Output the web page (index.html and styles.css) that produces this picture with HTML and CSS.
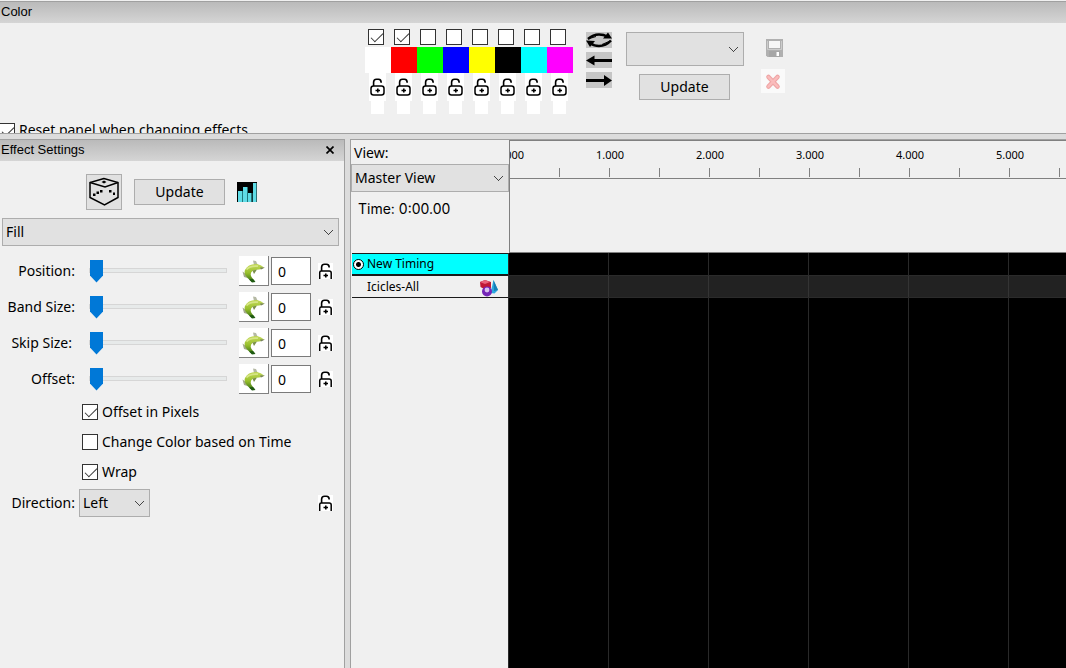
FILE: index.html
```html
<!DOCTYPE html>
<html lang="en">
<head>
<meta charset="utf-8">
<title>Sequencer</title>
<link rel="stylesheet" href="styles.css">
</head>
<body>
<svg class="defs" aria-hidden="true">
  <symbol id="lock" viewBox="0 0 16 18">
    <rect x="1" y="8" width="13" height="9" rx="2.5" fill="#fff" stroke="#000" stroke-width="1.5"/>
    <path d="M3.6 8V4.2Q3.6 1.2 6.5 1.2H8.5Q11.2 1.2 11.2 4.8" fill="none" stroke="#000" stroke-width="1.6"/>
    <path d="M5.5 12.5H10M7.8 10.5V14.5" stroke="#000" stroke-width="1.6"/>
  </symbol>
  <symbol id="lock-cut" viewBox="0 0 15 16">
    <path d="M1.7 16V9.6Q1.7 8 3.3 8H11.2Q13.2 8 13.2 10V16" fill="#fff" stroke="#000" stroke-width="1.5"/>
    <path d="M3.6 8V4.2Q3.6 1.2 6.5 1.2H8.5Q11.2 1.2 11.2 4.6" fill="none" stroke="#000" stroke-width="1.6"/>
    <path d="M5.5 12.5H10M7.8 10.5V14.5" stroke="#000" stroke-width="1.6"/>
  </symbol>
  <linearGradient id="fin" x1="0" y1="0" x2="0" y2="1">
    <stop offset="0.1" stop-color="#bcd552"/><stop offset="0.5" stop-color="#98bf2c"/><stop offset="1" stop-color="#2f6b10"/>
  </linearGradient>
  <symbol id="dolphin" viewBox="0 0 28 28">
    <path d="M14 3.5L17 4L19 8.5L15 8Z" fill="#b5b9a4"/>
    <path d="M7 17L3.500 14.500L5 20L8.500 21Z" fill="#a3a98a"/>
    <path d="M25 10.500Q22 7.500 18 7Q9 6.500 6 13Q4.500 17 8.500 21L13 25L16 24.500L12.500 20Q10.500 16.500 13.500 14Q16 12.500 20 12.500Q23 12.300 25 10.500Z" fill="url(#fin)"/>
    <path d="M7.500 12.500Q11 8.500 19 9.200" stroke="#d6e585" stroke-width="1.800" fill="none"/>
    <path d="M13.500 13.500L15 17L18 12.500Z" fill="#7a8f4a"/>
    <path d="M10 22.500L13 25.500L16.500 25L14 22Z" fill="#1f5a12"/>
    <path d="M21 10.500L26 10.500L22 12.500Z" fill="#777f62"/>
  </symbol>
</svg>

<section class="color-panel">
  <h2 class="caption">Color</h2>
  <div class="color-body">
    <div class="palette">
      <div class="slot"><input type="checkbox" checked aria-label="Color 1"><button class="swatch white" aria-label="White"></button><button class="slot-lock" aria-label="Lock 1"><svg><use href="#lock"/></svg></button></div>
      <div class="slot"><input type="checkbox" checked aria-label="Color 2"><button class="swatch red" aria-label="Red"></button><button class="slot-lock" aria-label="Lock 2"><svg><use href="#lock"/></svg></button></div>
      <div class="slot"><input type="checkbox" aria-label="Color 3"><button class="swatch green" aria-label="Green"></button><button class="slot-lock" aria-label="Lock 3"><svg><use href="#lock"/></svg></button></div>
      <div class="slot"><input type="checkbox" aria-label="Color 4"><button class="swatch blue" aria-label="Blue"></button><button class="slot-lock" aria-label="Lock 4"><svg><use href="#lock"/></svg></button></div>
      <div class="slot"><input type="checkbox" aria-label="Color 5"><button class="swatch yellow" aria-label="Yellow"></button><button class="slot-lock" aria-label="Lock 5"><svg><use href="#lock"/></svg></button></div>
      <div class="slot"><input type="checkbox" aria-label="Color 6"><button class="swatch black" aria-label="Black"></button><button class="slot-lock" aria-label="Lock 6"><svg><use href="#lock"/></svg></button></div>
      <div class="slot"><input type="checkbox" aria-label="Color 7"><button class="swatch cyan" aria-label="Cyan"></button><button class="slot-lock" aria-label="Lock 7"><svg><use href="#lock"/></svg></button></div>
      <div class="slot"><input type="checkbox" aria-label="Color 8"><button class="swatch magenta" aria-label="Magenta"></button><button class="slot-lock" aria-label="Lock 8"><svg><use href="#lock"/></svg></button></div>
    </div>
    <div class="shift">
      <button aria-label="Swap"><svg viewBox="0 0 26 16"><g fill="none" stroke="#000" stroke-width="2.400"><path d="M2 7Q7 2.500 13 2.500Q18 2.500 21 4.500"/><path d="M25 8.500Q20 14 13 14Q8 14 5 11.500"/></g><path d="M17 6.500L26 6.500L22 0.500Z"/><path d="M0 8.500L9 9L4 15Z"/><path d="M2 7L10 4.500M24 9L16 12.500" stroke="#000" stroke-width="1"/></svg></button>
      <button aria-label="Shift left"><svg viewBox="0 0 26 16"><path d="M0 8.500L8.500 3.500V13.500Z"/><path d="M7 7H26V10H7Z"/></svg></button>
      <button aria-label="Shift right"><svg viewBox="0 0 26 16"><path d="M26 8.500L18 3V14Z"/><path d="M0 7H19V10H0Z"/></svg></button>
    </div>
    <div class="presets">
      <select class="drop preset" aria-label="Palette"><option></option></select>
      <button class="push">Update</button>
    </div>
    <div class="files">
      <button class="save" aria-label="Save" disabled><svg viewBox="0 0 17 18"><path d="M0 0H17V18H1.500L0 16.500Z" fill="#b0b0b0"/><path d="M3 2H14V9H3Z" fill="#f6f6f6"/><path d="M1.500 2V10.500H15.500V2" fill="none" stroke="#ccc"/><path d="M3 12H14V18H3Z" fill="#a6a6a6"/><path d="M10.500 13H13V17H10.500Z" fill="#fff"/></svg></button>
      <button class="delete" aria-label="Delete" disabled><svg viewBox="0 0 24 24"><path d="M7.500 8L16.500 17.500M16.500 8L7.500 17.500" stroke="#eea5a5" stroke-width="4.600" stroke-linecap="round"/><path d="M7.500 8L16.500 17.500M16.500 8L7.500 17.500" stroke="#fabcbc" stroke-width="2.500" stroke-linecap="round"/></svg></button>
    </div>
  </div>
  <label class="reset"><input type="checkbox" checked>Reset panel when changing effects</label>
</section>

<main class="work">
  <section class="settings">
    <header class="caption split"><h2>Effect Settings</h2><button class="close" aria-label="Close"><svg viewBox="0 0 8 8"><path d="M0.500 0.500L7.500 7.500M7.500 0.500L0.500 7.500" stroke="#000" stroke-width="1.700"/></svg></button></header>
    <div class="tools">
      <button class="dice" aria-label="Randomize"><svg viewBox="0 0 30 30"><g fill="none" stroke="#000" stroke-width="1.500"><path d="M15 1.500L1 5.500V20.500L15.500 28L29 20.500V5.500Z"/><path d="M1 5.500L16 10L29 5.500"/></g><path d="M12.500 5L15 3.500L17.500 5L15 6.500Z"/><path d="M4 16.500H6.500V19H4ZM7.500 14.500H10V17H7.500ZM11 13H13.500V15.500H11ZM20 13H22.500V15.500H20ZM24 15.500H26V18H24Z"/></svg></button>
      <button class="push">Update</button>
      <button class="chart" aria-label="Value curves"><svg viewBox="0 0 20 20"><path d="M0 0H20V20H0Z"/><path d="M1 9H5.500V20H1ZM6 5H10.500V20H6ZM11 11H14.500V20H11ZM16 1H19.500V20H16Z" fill="#5fdce6"/><path d="M5.500 9V20M10.500 6V20M15 11V20" stroke="#20777d"/></svg></button>
    </div>
    <select class="drop effect" aria-label="Effect"><option>Fill</option></select>
    <div class="sliders">
      <div class="param"><label for="pos">Position:</label><input type="range" id="pos" value="0"><button class="curve" aria-label="Position curve"><svg><use href="#dolphin"/></svg></button><input type="text" value="0" aria-label="Position value"><button class="lock" aria-label="Lock position"><svg><use href="#lock-cut"/></svg></button></div>
      <div class="param"><label for="band">Band Size:</label><input type="range" id="band" value="0"><button class="curve" aria-label="Band size curve"><svg><use href="#dolphin"/></svg></button><input type="text" value="0" aria-label="Band size value"><button class="lock" aria-label="Lock band size"><svg><use href="#lock-cut"/></svg></button></div>
      <div class="param"><label class="near" for="skip">Skip Size:</label><input type="range" id="skip" value="0"><button class="curve" aria-label="Skip size curve"><svg><use href="#dolphin"/></svg></button><input type="text" value="0" aria-label="Skip size value"><button class="lock" aria-label="Lock skip size"><svg><use href="#lock-cut"/></svg></button></div>
      <div class="param"><label for="off">Offset:</label><input type="range" id="off" value="0"><button class="curve" aria-label="Offset curve"><svg><use href="#dolphin"/></svg></button><input type="text" value="0" aria-label="Offset value"><button class="lock" aria-label="Lock offset"><svg><use href="#lock-cut"/></svg></button></div>
    </div>
    <div class="checks">
      <label><input type="checkbox" checked>Offset in Pixels</label>
      <label><input type="checkbox">Change Color based on Time</label>
      <label><input type="checkbox" checked>Wrap</label>
    </div>
    <div class="direction"><label for="dir">Direction:</label><select class="drop" id="dir"><option>Left</option></select><button class="lock" aria-label="Lock direction"><svg><use href="#lock-cut"/></svg></button></div>
  </section>

  <section class="sequence">
    <div class="side">
      <div class="view">
        <label for="view">View:</label>
        <select class="drop" id="view"><option>Master View</option></select>
        <p class="time">Time: 0:00.00</p>
      </div>
      <div class="row timing"><input type="radio" name="timing" checked aria-label="New Timing active"><span>New Timing</span></div>
      <div class="row model"><span>Icicles-All</span><svg viewBox="0 0 18 17"><path d="M10.500 13L13.500 0L18 10L14.500 13.500Z" fill="#2fa9e0"/><path d="M13.500 0L18 10L14 11Z" fill="#147fb8"/><path d="M0 2L5 0L11 2V8L5 9.500L0.500 7Z" fill="#c01835"/><path d="M0 2L5 0L10 2L5 4Z" fill="#e8627a"/><circle cx="7" cy="11.500" r="5" fill="#7426b8"/><circle cx="7" cy="10" r="2.400" fill="#d9c2ef"/></svg></div>
    </div>
    <div class="timeline">
      <div class="ruler"><div class="marks"><span>0.000</span><span>1.000</span><span>2.000</span><span>3.000</span><span>4.000</span><span>5.000</span></div></div>
      <div class="grid"><div class="band"></div></div>
    </div>
  </section>
</main>
</body>
</html>
```
FILE: styles.css
```css
* { box-sizing: border-box; }
body {
  margin: 0;
  height: 100vh;
  display: flex;
  flex-direction: column;
  gap: 5px;
  overflow: hidden;
  background: #dcdcdc;
  color: #000;
  font: 14px/20px "Noto Sans", "Open Sans", sans-serif;
}
button, input, select { font: inherit; color: inherit; margin: 0; padding: 0; border-radius: 0; }
button { border: 0; background: none; }
svg { display: block; }
h2, p { margin: 0; }
.defs { position: absolute; width: 0; height: 0; }

.caption, .caption h2 { font: 13px/19px "Liberation Sans", Arial, sans-serif; }
.caption {
  height: 22px;
  padding: 0 0 0 1px;
  border-top: 1px solid #a0a0a0;
  background: linear-gradient(#bababa, #d5d5d5);
}
.split { display: flex; justify-content: space-between; align-items: flex-start; padding-right: 10px; }
.close { padding-top: 6px; }
.close svg { width: 8px; height: 8px; }

input[type="checkbox"] {
  appearance: none;
  width: 16px;
  height: 16px;
  flex: none;
  border: 1px solid #333;
  background: #fff;
}
input[type="checkbox"]:checked::before {
  content: "";
  display: block;
  width: 11px;
  height: 5px;
  margin: 3px 0 0 2px;
  border: solid #333;
  border-width: 0 0 1px 1px;
  transform: rotate(-45deg);
}
.drop {
  appearance: none;
  height: 28px;
  padding: 0 24px 0 3px;
  border: 1px solid #adadad;
  background-color: #e1e1e1;
  background-image: linear-gradient(45deg, transparent 44%, #444 44%, #444 58%, transparent 58%), linear-gradient(-45deg, transparent 44%, #444 44%, #444 58%, transparent 58%);
  background-size: 5px 5px, 5px 5px;
  background-position: right 9px center, right 5px center;
  background-repeat: no-repeat;
}
.push {
  width: 91px;
  height: 26px;
  border: 1px solid #adadad;
  background: #e1e1e1;
}

.color-panel {
  height: 134px;
  flex: none;
  padding-top: 1px;
  overflow: hidden;
  border-bottom: 1px solid #a0a0a0;
  background: #f0f0f0;
  display: flex;
  flex-direction: column;
}
.color-panel .caption { flex: none; }
.color-body {
  display: grid;
  grid-template-columns: 365fr auto auto auto auto 281fr;
  flex: none;
  height: 97px;
  padding-top: 6px;
}
.palette { grid-column: 2; display: flex; }
.slot { width: 26px; display: flex; flex-direction: column; }
.slot input { margin: 0 0 2px 3px; }
.swatch { width: 26px; height: 26px; }
.slot-lock {
  width: 17px;
  height: 41px;
  margin-left: 4px;
  padding: 5px 0 0 1px;
  background: linear-gradient(#fff, #fff) 0 0 / 17px 28px no-repeat, linear-gradient(#fff, #fff) 2px 28px / 13px 13px no-repeat;
}
.slot-lock svg { width: 16px; height: 18px; margin-bottom: 18px; }
.white { background: #fff; }
.red { background: #f00; }
.green { background: #0f0; }
.blue { background: #00f; }
.yellow { background: #ff0; }
.black { background: #000; }
.cyan { background: #0ff; }
.magenta { background: #f0f; }
.shift { display: flex; flex-direction: column; gap: 4px; padding: 3px 0 0 13px; }
.shift button { width: 26px; height: 16px; background: #c6c6c6; }
.presets { display: flex; flex-direction: column; gap: 8px; padding: 3px 0 0 14px; }
.presets .push { margin-left: 13px; }
.preset { width: 118px; height: 34px; }
.files { display: flex; flex-direction: column; gap: 12px; padding: 10px 0 0 17px; }
.save { width: 17px; height: 18px; margin-left: 5px; }
.delete { width: 24px; height: 24px; background: #fafafa; }
.reset { display: flex; align-items: center; gap: 4px; flex: none; margin-left: -1px; height: 20px; }
.reset input { margin-top: 2px; }

.work { flex: 1; min-height: 0; display: grid; grid-template-columns: 345px 1fr; column-gap: 5px; }
.settings { border-right: 1px solid #a0a0a0; background: #f0f0f0; }
.tools { display: flex; align-items: center; gap: 12px; padding: 13px 0 8px 86px; }
.dice { width: 36px; height: 36px; padding: 2px; border: 1px solid #adadad; background: #e1e1e1; }
.chart { width: 20px; height: 20px; }
.effect { display: block; width: calc(100% - 7px); margin-left: 2px; }
.sliders { padding-top: 7px; }
.param { height: 36px; display: flex; align-items: center; }
.param label, .direction label { width: 75px; flex: none; text-align: right; white-space: nowrap; }
.param .near { padding-right: 3px; }
input[type="range"] { appearance: none; flex: 1; min-width: 0; height: 24px; margin: 0 12px 2px 14px; background: none; }
input[type="range"]::-webkit-slider-runnable-track { height: 5px; border: 1px solid #d6d6d6; background: #e7eaea; }
input[type="range"]::-webkit-slider-thumb {
  appearance: none;
  width: 13px;
  height: 23px;
  margin-top: -9px;
  background: #0078d7;
  clip-path: polygon(0 0, 100% 0, 100% 70%, 50% 100%, 0 70%);
}
.curve { width: 30px; height: 30px; border: solid #808080; border-width: 0 1px 1px 0; background: #fff; }
.curve svg { width: 28px; height: 28px; }
input[type="text"] { width: 40px; height: 28px; margin: 0 7px 0 2px; padding: 0 6px; border: 1px solid #7a7a7a; background: #fff; }
.lock { width: 15px; height: 16px; margin-right: 11px; background: #fff; }
.lock svg { width: 15px; height: 16px; }
.checks label { display: flex; align-items: center; gap: 4px; height: 30px; padding-left: 82px; }
.direction { display: flex; align-items: center; padding-top: 2px; }
.direction .drop { width: 71px; margin: 0 auto 0 4px; }

.sequence { min-width: 0; display: grid; grid-template-columns: 158px 1fr; border: solid #a0a0a0; border-width: 1px 0 0 1px; background: #f0f0f0; }
.view { height: 113px; display: flex; flex-direction: column; }
.view label { height: 24px; padding: 3px 0 0 3px; }
.time { padding: 7px 0 0 7px; font: 14px/20px Inter, sans-serif; }
.row { display: flex; align-items: center; height: 22px; margin-left: 1px; border-bottom: 1px solid #1a1a1a; font-size: 12px; line-height: 16px; }
.timing { height: 23px; border-top: 1px solid #1a1a1a; border-bottom-width: 2px; background: #0ff; }
.timing input { appearance: none; width: 11px; height: 11px; margin: 0 3px 0 1px; border: 1px solid #000; border-radius: 50%; background: radial-gradient(#000 0 2px, #fff 3px); }
.model { justify-content: space-between; padding: 0 11px 0 15px; }
.model svg { width: 18px; height: 17px; margin-top: 4px; }
.timeline { min-width: 0; display: flex; flex-direction: column; }
.ruler { height: 113px; flex: none; overflow: hidden; border: 1px solid #808080; border-right: 0; }
.marks {
  display: flex;
  height: 38px;
  padding-top: 4px;
  border-bottom: 1px solid #808080;
  background: repeating-linear-gradient(90deg, transparent 0 49px, #808080 49px 50px) 0 27px / 100% 9px no-repeat;
  font-size: 11px;
}
.marks span { width: 100px; flex: none; text-align: center; }
.marks span:first-child { margin-left: -50px; }
.grid {
  flex: 1;
  margin-left: -1px;
  padding-top: 22px;
  background: linear-gradient(90deg, #292929 1px, transparent 1px) 100px 0 / 100px 100%, #000;
}
.band { height: 23px; background: rgba(62, 62, 62, 0.55); border: solid #2b2b2b; border-width: 1px 0; }
```
